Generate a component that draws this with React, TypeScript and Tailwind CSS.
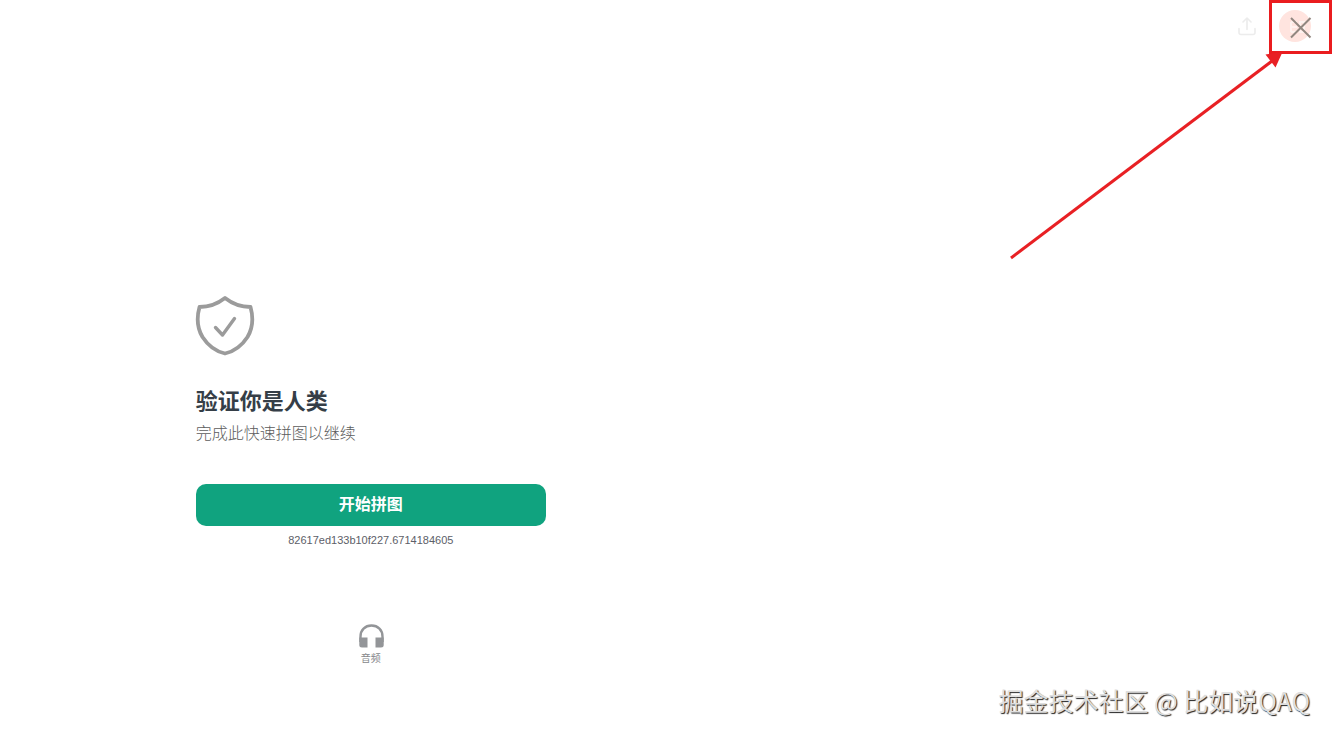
function ShieldIcon() {
  return (
    <svg
      aria-hidden="true"
      viewBox="0 0 60 62"
      className="-ml-px h-[62px] w-[60px]"
      fill="none"
      stroke="#9b9b9b"
      strokeWidth="3.800"
      strokeLinecap="round"
      strokeLinejoin="round"
    >
      <path d="M30 4C23 9.500 14 13 4.500 13C2 22 1.500 33 7.500 43C13 51.500 21 57.500 30 59.500C39 57.500 47 51.500 52.500 43C58.500 33 58 22 55.500 13C46 13 37 9.500 30 4Z" />
      <path d="M20.500 33.500L27.500 41L39.500 24.500" strokeWidth="3.400" />
    </svg>
  );
}

function HeadphonesIcon() {
  return (
    <svg aria-hidden="true" viewBox="0 0 26 26" className="h-[26px] w-[26px]">
      <path
        d="M2.500 19V13.500C2.500 7 7 2.500 13.500 2.500S24.500 7 24.500 13.500V19"
        fill="none"
        stroke="#939598"
        strokeWidth="2.400"
      />
      <path
        d="M1.300 14.500H9.500V24.500H4Q1.300 24.500 1.300 22ZM17.500 14.500H25.700V22Q25.700 24.500 23 24.500H17.500Z"
        fill="#939598"
      />
    </svg>
  );
}

function Header() {
  return (
    <header className="flex h-[54px] items-center justify-end gap-3">
      <button type="button" aria-label="分享" className="flex h-5 w-5 items-center justify-center">
        <svg
          viewBox="0 0 20 20"
          className="h-5 w-5"
          fill="none"
          stroke="#ececec"
          strokeWidth="1.600"
          strokeLinecap="round"
          strokeLinejoin="round"
        >
          <path d="M10 12.500V1.500M6 5L10 1L14 5M2 11.500V15.500Q2 17.500 4 17.500H16Q18 17.500 18 15.500V11.500" />
        </svg>
      </button>
      <button
        type="button"
        aria-label="关闭"
        className="flex h-[54px] w-[63px] items-center justify-center border-3 border-[#ea1c1f]"
      >
        <svg viewBox="0 0 57 48" className="h-12 w-[57px]" fill="none">
          <circle cx="23" cy="23" r="16" fill="#ffe4df" />
          <path d="M19 19H25M19 24H25M19 29H25M19 19V29M28 19H32V29H28Z" stroke="#fff2ef" strokeWidth="2" />
          <path d="M19 15L38.500 34.500M38.500 15L19 34.500" stroke="#928780" strokeWidth="2" />
        </svg>
      </button>
    </header>
  );
}

export default function App() {
  return (
    <div
      lang="zh-CN"
      className="relative flex min-h-screen flex-col bg-white font-['Liberation_Sans','Noto_Sans_CJK_SC',sans-serif]"
    >
      <Header />
      <main className="mx-[15%] flex-1 pt-60">
        <div className="-ml-1 w-[350px]">
          <ShieldIcon />
          <h1 className="mt-[30px] text-[22px] leading-8 font-bold text-[#353e47]">验证你是人类</h1>
          <p className="text-base leading-8 font-light text-[#5c5c5c]">完成此快速拼图以继续</p>
          <button
            type="button"
            className="mt-[34px] h-[42px] w-full rounded-[10px] bg-[#10a37f] text-base font-bold text-white"
          >
            开始拼图
          </button>
          <p className="mt-1 text-center text-[11px] leading-5 text-[#5d6068]">82617ed133b10f227.6714184605</p>
          <button
            type="button"
            className="mx-auto mt-[73px] flex flex-col items-center text-[10px] leading-5 text-[#85878a]"
          >
            <HeadphonesIcon />
            <span>音频</span>
          </button>
        </div>
      </main>
      <footer className="flex justify-end pr-[22px] pb-5 font-['Noto_Sans_CJK_SC',sans-serif] text-[25px] leading-9 text-[#dedede] [text-shadow:1px_1px_1px_#222]">
        掘金技术社区 @ 比如说QAQ
      </footer>
      <svg
        aria-hidden="true"
        viewBox="0 0 274 212"
        className="pointer-events-none absolute top-[50px] right-[48px] h-[212px] w-[274px]"
      >
        <path d="M1 208L262 11" stroke="#e82024" strokeWidth="3" />
        <path d="M272.500 2L265.500 17.500L255.500 4.500Z" fill="#e82024" />
      </svg>
    </div>
  );
}
